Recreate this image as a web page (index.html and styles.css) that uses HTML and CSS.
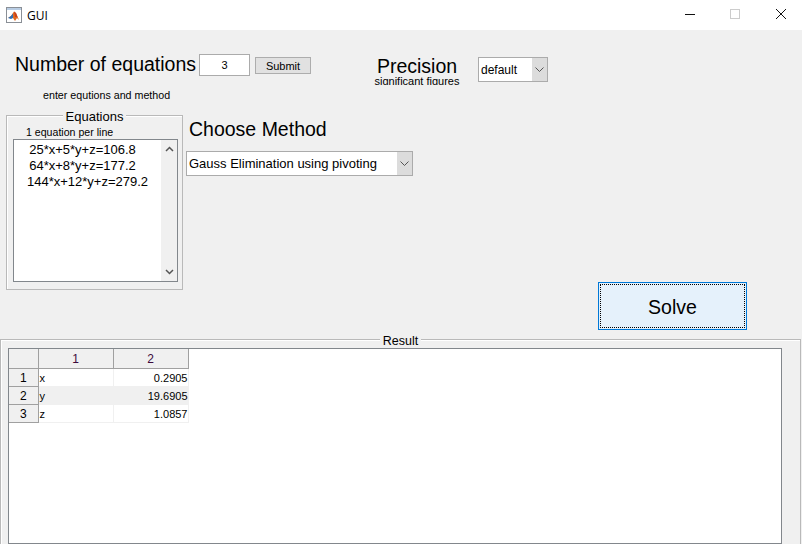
FILE: index.html

```html
<!DOCTYPE html>
<html lang="en">
<head>
    <meta charset="UTF-8">
    <meta name="viewport" content="width=device-width, initial-scale=1.0">
    <title>GUI</title>
    <link rel="stylesheet" href="styles.css">
</head>
<body>
    <div class="titlebar">
        <svg class="app-icon" width="17" height="17" viewBox="0 0 17 17">
            <rect x="0.5" y="0.5" width="15" height="15" fill="#fff" stroke="#8a8f96"/>
            <rect x="1" y="1" width="14" height="2" fill="#b9cde4"/>
            <path d="M2 11 L5 9 L8 4.5 L10 6 L13 13 L11 11 L9 14 L7 11 Z" fill="#e2691e"/>
            <path d="M2 11 L5 9 L7 6.5 L7 11 L5 12 Z" fill="#2f6fb5"/>
            <path d="M8 4.5 L10 6 L11.5 10 L9 10 Z" fill="#c9401a"/>
        </svg>
        <span class="app-name">GUI</span>
        <div class="win-buttons">
            <svg width="45" height="30" viewBox="0 0 45 30"><path d="M18 14.5 H28" stroke="#111" fill="none"/></svg>
            <svg width="45" height="30" viewBox="0 0 45 30"><rect x="18.5" y="9.5" width="9" height="9" stroke="#ccc" fill="none"/></svg>
            <svg width="45" height="30" viewBox="0 0 45 30"><path d="M19 9 L29 19 M29 9 L19 19" stroke="#111" fill="none"/></svg>
        </div>
    </div>

    <div class="window">
        <div class="top-row">
            <span class="big-label count-label">Number of equations</span>
            <input class="count-input" type="text" value="3">
            <button class="submit-btn">Submit</button>
            <div class="precision">
                <div class="big-label precision-label">Precision</div>
                <div class="precision-note">significant figures</div>
            </div>
            <div class="dropdown precision-select">
                <span class="dropdown-text">default</span>
                <span class="dropdown-arrow">
                    <svg width="9" height="6" viewBox="0 0 9 6"><path d="M0.5 0.5 L4.5 4.5 L8.5 0.5" stroke="#555" fill="none"/></svg>
                </span>
            </div>
        </div>
        <div class="hint">enter equtions and method</div>

        <div class="mid-row">
            <div class="panel equations">
                <div class="panel-title">Equations</div>
                <div class="per-line">1 equation per line</div>
                <div class="listbox">
                    <div class="listbox-lines">
                        <div class="short-line">25*x+5*y+z=106.8</div>
                        <div class="short-line">64*x+8*y+z=177.2</div>
                        <div>144*x+12*y+z=279.2</div>
                    </div>
                    <div class="scrollbar">
                        <svg width="9" height="6" viewBox="0 0 9 6"><path d="M1 5 L4.5 1.5 L8 5" stroke="#555" stroke-width="1.5" fill="none"/></svg>
                        <svg width="9" height="6" viewBox="0 0 9 6"><path d="M1 1 L4.5 4.5 L8 1" stroke="#555" stroke-width="1.5" fill="none"/></svg>
                    </div>
                </div>
            </div>

            <div class="method">
                <div class="big-label method-label">Choose Method</div>
                <div class="dropdown method-select">
                    <span class="dropdown-text">Gauss Elimination using pivoting</span>
                    <span class="dropdown-arrow">
                        <svg width="9" height="6" viewBox="0 0 9 6"><path d="M0.5 0.5 L4.5 4.5 L8.5 0.5" stroke="#555" fill="none"/></svg>
                    </span>
                </div>
                <button class="solve-btn"><span class="solve-focus">Solve</span></button>
            </div>
        </div>

        <div class="panel result">
            <div class="panel-title">Result</div>
            <div class="table-box">
                <table class="result-table">
                    <tr>
                        <th class="corner"></th>
                        <th class="col-head">1</th>
                        <th class="col-head">2</th>
                    </tr>
                    <tr>
                        <th class="row-head">1</th>
                        <td>x</td>
                        <td class="num">0.2905</td>
                    </tr>
                    <tr class="alt">
                        <th class="row-head">2</th>
                        <td>y</td>
                        <td class="num">19.6905</td>
                    </tr>
                    <tr>
                        <th class="row-head">3</th>
                        <td>z</td>
                        <td class="num">1.0857</td>
                    </tr>
                </table>
            </div>
        </div>
    </div>
</body>
</html>
```

FILE: styles.css

```css
html, body {
    margin: 0;
    padding: 0;
    height: 544px;
    overflow: hidden;
}
body {
    font-family: "Liberation Sans", Arial, sans-serif;
    color: #000;
    background: #f0f0f0;
}
.titlebar {
    height: 30px;
    background: #fff;
    display: flex;
    align-items: center;
    padding-left: 6px;
}
.app-name {
    font-family: "Open Sans", sans-serif;
    font-size: 12px;
    margin-left: 4px;
}
.win-buttons {
    margin-left: auto;
    display: flex;
}
.win-buttons svg {
    display: block;
}
.window {
    height: 514px;
    overflow: hidden;
}
.top-row {
    display: flex;
    height: 28px;
    padding-top: 24px;
}
.big-label {
    font-size: 19.5px;
    line-height: 23px;
}
.count-label {
    margin: -1px 0 0 15px;
    width: 184px;
    white-space: nowrap;
}
.count-input {
    box-sizing: border-box;
    width: 51px;
    height: 22px;
    border: 1px solid #ababab;
    background: #fff;
    text-align: center;
    font: 11px "Liberation Sans", Arial, sans-serif;
    padding: 0;
}
.submit-btn {
    box-sizing: border-box;
    width: 56px;
    height: 17px;
    margin: 3px 0 0 5px;
    border: 1px solid #adadad;
    background: #e1e1e1;
    font: 11px "Liberation Sans", Arial, sans-serif;
    padding: 0;
}
.precision {
    width: 90px;
    margin-left: 61px;
    text-align: center;
    padding-top: 3px;
}
.precision-label {
    line-height: 19px;
}
/* label box is too short for it, the descenders get cut off */
.precision-note {
    font-size: 11px;
    line-height: 10px;
    height: 9px;
    overflow: hidden;
}
.dropdown {
    box-sizing: border-box;
    display: flex;
    background: #fff;
    border: 1px solid #ababab;
}
.dropdown-text {
    flex: 1;
    padding-left: 2px;
    white-space: nowrap;
    align-self: center;
}
.dropdown-arrow {
    width: 15px;
    background: #dcdcdc;
    display: flex;
    align-items: center;
    justify-content: center;
}
.precision-select {
    width: 70px;
    height: 25px;
    margin: 3px 0 0 16px;
    font-size: 12px;
}
.hint {
    font-size: 10.7px;
    line-height: 12px;
    margin: 7px 0 0 43px;
    height: 13px;
    white-space: nowrap;
}
.mid-row {
    display: flex;
    height: 215px;
    margin-top: 13px;
}
.panel {
    box-sizing: border-box;
    border: 1px solid #b9b9b9;
    box-shadow: inset 1px 1px 0 #fff;
}
.panel-title {
    width: fit-content;
    margin: -7px auto 0;
    padding: 0 3px;
    background: #f0f0f0;
    line-height: 16px;
}
.equations {
    width: 177px;
    height: 175px;
    margin-left: 6px;
    font-size: 12px;
}
.equations .panel-title {
    font-size: 13px;
}
.per-line {
    font-size: 10.6px;
    line-height: 12px;
    margin: 1px 0 0 19px;
}
.listbox {
    box-sizing: border-box;
    display: flex;
    width: 165px;
    height: 143px;
    margin: 1px 0 0 6px;
    background: #fff;
    border: 1px solid #82878c;
}
.listbox-lines {
    flex: 1;
    text-align: center;
    font-size: 13px;
    line-height: 16px;
    padding-top: 2px;
}
.short-line {
    padding-right: 10px;
}
.scrollbar {
    width: 16px;
    background: #f0f0f0;
    display: flex;
    flex-direction: column;
    justify-content: space-between;
    align-items: center;
    padding: 6px 0;
    box-sizing: border-box;
}
.scrollbar svg {
    display: block;
}
.method {
    flex: 1;
    display: flex;
    flex-direction: column;
    padding-left: 3px;
}
.method-label {
    margin: 3px 0 0 3px;
}
.method-select {
    width: 227px;
    height: 25px;
    margin-top: 10px;
    font-size: 13px;
}
.solve-btn {
    box-sizing: border-box;
    width: 149px;
    height: 48px;
    margin: auto 0 0 412px;
    padding: 1px;
    border: 1px solid #0078d7;
    background: #e5f1fb;
    font: 19.5px "Liberation Sans", Arial, sans-serif;
}
.solve-focus {
    display: flex;
    align-items: center;
    justify-content: center;
    height: 100%;
    padding-top: 2px;
    border: 1px dotted #000;
    box-sizing: border-box;
}
.result {
    width: 801px;
    height: 220px;
    margin-top: 9px;
    border-bottom: 0;
}
.result .panel-title {
    font-size: 12.5px;
    margin-bottom: -1px;
}
.table-box {
    box-sizing: border-box;
    width: 774px;
    height: 196px;
    margin: 0 0 0 7px;
    background: #fff;
    border: 1px solid #82878c;
}
.result-table {
    border-collapse: collapse;
    font-size: 11px;
}
.result-table th, .result-table td {
    padding: 1px 0 0;
    font-weight: normal;
    box-sizing: border-box;
}
.result-table th {
    background: #f0f0f0;
    border-right: 1px solid #a0a0a0;
    border-bottom: 1px solid #a0a0a0;
    text-align: center;
    height: 18px;
}
.corner {
    width: 29px;
}
.col-head {
    width: 75px;
    color: #3c0a3c;
    font-size: 12px;
}
.result-table tr:first-child th {
    height: 19px;
}
.row-head {
    font-size: 12px;
}
.result-table td {
    height: 18px;
    padding: 1px 0 0 1px;
    border-right: 1px solid #f0f0f0;
    border-bottom: 1px solid #f0f0f0;
}
.result-table .alt td {
    background: #f0f0f0;
}
.result-table .num {
    text-align: right;
}
```
